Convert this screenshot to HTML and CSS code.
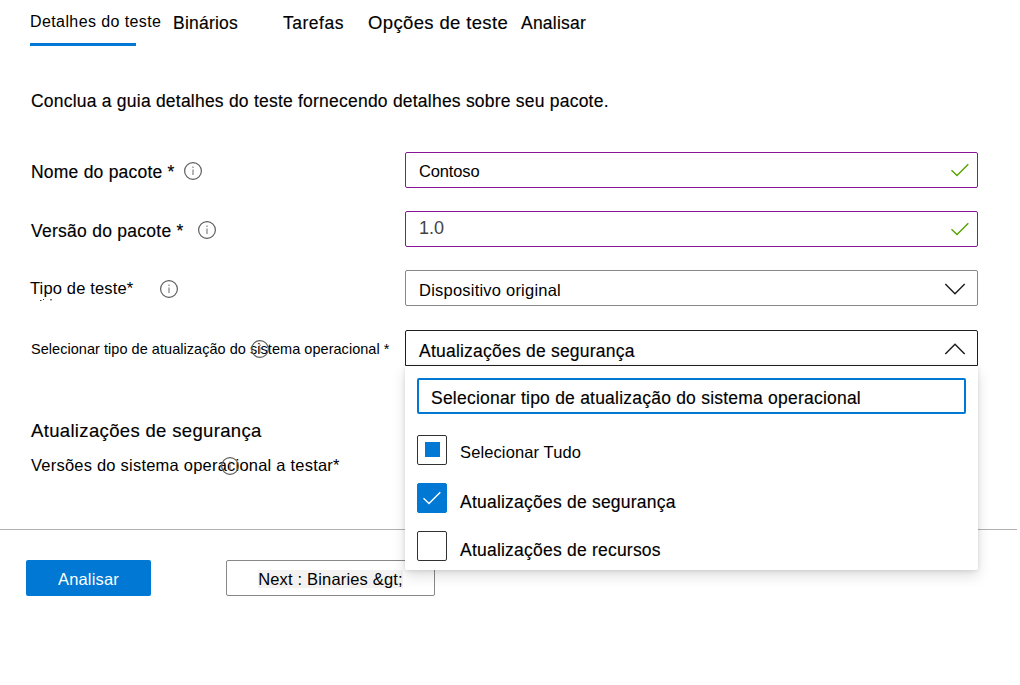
FILE: index.html
```html
<!DOCTYPE html>
<html lang="pt">
<head>
<meta charset="utf-8">
<title>Detalhes do teste</title>
<link rel="stylesheet" href="styles.css">
</head>
<body>
<svg class="defs" width="0" height="0">
  <symbol id="info" viewBox="0 0 20 20"><circle cx="10" cy="10" r="8.4" fill="none" stroke="#605e5c" stroke-width="1.2"/><path d="M10 8.5v5.5M10 5.6v1.4" stroke="#858381" stroke-width="1.2"/></symbol>
  <symbol id="check" viewBox="0 0 20 16"><path d="M1.5 8.3L7 13.6L18.3 2.3" fill="none" stroke="currentColor" stroke-width="1.4"/></symbol>
  <symbol id="down" viewBox="0 0 22 12"><path d="M1.3 1L11 10.7L20.7 1" fill="none" stroke="#1b1a19" stroke-width="1.4"/></symbol>
</svg>
<nav class="tabs">
  <a class="tab tab-active">Detalhes do teste</a>
  <a class="tab tab-bin">Binários</a>
  <a class="tab tab-tasks">Tarefas</a>
  <a class="tab tab-options">Opções de teste</a>
  <a class="tab tab-review">Analisar</a>
</nav>
<p class="intro">Conclua a guia detalhes do teste fornecendo detalhes sobre seu pacote.</p>
<main class="form">
  <div class="row">
    <div class="label label-name"><span>Nome do pacote *</span><svg class="info"><use href="#info"/></svg></div>
    <div class="field valid"><span class="value contoso">Contoso</span><svg class="check"><use href="#check"/></svg></div>
  </div>
  <div class="row">
    <div class="label label-version"><span>Versão do pacote *</span><svg class="info"><use href="#info"/></svg></div>
    <div class="field valid"><span class="value version">1.0</span><svg class="check"><use href="#check"/></svg></div>
  </div>
  <div class="row row-type">
    <div class="label label-type"><span>Tipo de teste*</span><svg class="info"><use href="#info"/></svg>
      <svg class="clipped" viewBox="0 0 16 2"><path d="M1 1.5h1.5M4 .5h1M11 .8h2" stroke="#333" stroke-width="1"/></svg>
    </div>
    <div class="field"><span class="value device">Dispositivo original</span><svg class="chevron"><use href="#down"/></svg></div>
  </div>
  <div class="row row-update">
    <div class="label label-update"><span>Selecionar tipo de atualização do sistema operacional *</span><svg class="info info-over"><use href="#info"/></svg></div>
    <div class="select">
      <div class="field open"><span class="value selected">Atualizações de segurança</span><svg class="chevron up"><use href="#down"/></svg></div>
      <div class="menu">
        <div class="search">Selecionar tipo de atualização do sistema operacional</div>
        <div class="option all"><span class="box partial"></span><span class="option-text">Selecionar Tudo</span></div>
        <div class="option"><span class="box checked"><svg class="check"><use href="#check"/></svg></span><span class="option-text">Atualizações de segurança</span></div>
        <div class="option"><span class="box"></span><span class="option-text">Atualizações de recursos</span></div>
      </div>
    </div>
  </div>
</main>
<section class="versions">
  <h2 class="heading">Atualizações de segurança</h2>
  <div class="os"><span>Versões do sistema operacional a testar*</span><svg class="info os-info"><use href="#info"/></svg></div>
</section>
<footer class="footer">
  <button class="btn primary">Analisar</button>
  <button class="btn next"><span class="mark">Next : Binaries &amp;gt;</span></button>
</footer>
</body>
</html>
```
FILE: styles.css
```css
* { box-sizing: border-box; }
body {
  margin: 0;
  width: 1020px;
  height: 685px;
  overflow: hidden;
  background: #fff;
  color: #000;
  font: 17.5px/20px "Liberation Sans", Arial, sans-serif;
  letter-spacing: 0.22px;
}
.defs { display: block; }
.tabs, .intro, .label-name, .label-version, .selected, .search, .option, .heading { -webkit-text-stroke: 0.15px #000; }
.tabs { display: flex; height: 46px; padding-left: 30px; white-space: nowrap; }
.tab { padding-top: 13px; }
.tab-active {
  width: 106px;
  margin-right: 37px;
  padding-top: 12px;
  border-bottom: 3px solid #0078d4;
  font-size: 16px;
  letter-spacing: 0.4px;
  -webkit-text-stroke: 0;
}
.tab-bin { width: 110px; }
.tab-tasks { width: 85px; letter-spacing: 0.5px; }
.tab-options { width: 153px; font-size: 18.5px; letter-spacing: 0.36px; }
.intro { margin: 45px 0 0 31px; height: 61px; }
.form { display: grid; padding-left: 30px; }
.row { display: grid; grid-template-columns: 375px 573px; height: 59px; }
.row-type { height: 60px; }
.row-update { height: 36px; }
.label { position: relative; display: flex; align-items: flex-start; padding: 10px 0 0 1px; white-space: nowrap; }
.info { flex: none; width: 20px; height: 20px; }
.label .info { margin-top: -1px; }
.label-name { gap: 8px; letter-spacing: 0.22px; }
.label-version { gap: 13px; letter-spacing: 0.26px; }
.label-type { gap: 26px; padding: 8px 0 0; font-size: 16.5px; letter-spacing: 0.15px; }
.label-type .info { margin-top: 1px; }
.label-update { padding-top: 9px; font-size: 14.5px; letter-spacing: 0.04px; }
.label .info-over { position: absolute; left: 220px; top: 9px; margin: 0; }
.clipped { position: absolute; left: 9px; top: 29px; width: 16px; height: 2px; }
.field {
  display: flex;
  justify-content: space-between;
  width: 573px;
  height: 36px;
  padding-left: 13px;
  border: 1px solid #8a8886;
  border-radius: 2px;
}
.valid { border-color: #881798; }
.value { padding-top: 9px; }
.contoso { padding-top: 8px; font-size: 16.5px; letter-spacing: -0.15px; }
.version { padding-top: 6px; font-size: 18px; color: #444; letter-spacing: 0; }
.device { font-size: 16.5px; letter-spacing: 0.22px; }
.selected { padding-top: 10px; }
.check { width: 20px; height: 16px; margin: 9px 7px 0 0; color: #57a300; }
.chevron { width: 22px; height: 12px; margin: 12px 11px 0 0; }
.up { transform: scaleY(-1); }
.select { position: relative; }
.open { border-color: #201f1e; border-radius: 2px 2px 0 0; }
.menu {
  position: absolute;
  z-index: 2;
  left: 0;
  top: 36px;
  width: 573px;
  height: 204px;
  padding: 12px;
  background: #fff;
  border-radius: 0 0 2px 2px;
  box-shadow: 0 6px 14px rgba(0, 0, 0, .13), 0 1px 4px rgba(0, 0, 0, .11);
}
.search {
  height: 36px;
  padding: 8px 0 0 12px;
  border: 2px solid #0078d4;
  border-radius: 2px;
}
.option { display: flex; gap: 13px; height: 48px; }
.all { height: 48px; margin-top: 21px; font-size: 16.5px; letter-spacing: 0.12px; -webkit-text-stroke: 0; }
.box { display: flex; flex: none; width: 30px; height: 30px; border: 1px solid #323130; border-radius: 2px; }
.partial::before { content: ""; width: 15px; height: 15px; margin: 6px 0 0 7px; background: #0078d4; }
.checked { border-color: #0078d4; background: #0078d4; }
.checked .check { margin: 6px 0 0 4px; color: #fff; }
.option-text { padding-top: 9px; }
.all .option-text { padding-top: 7px; }
.versions { height: 163px; padding: 55px 0 0 31px; }
.heading { margin: 0; font-size: 18.5px; font-weight: 400; line-height: 20px; letter-spacing: 0.34px; }
.os { position: relative; padding-top: 14px; font-size: 16.5px; letter-spacing: 0.22px; }
.os-info { position: absolute; left: 189px; top: 15px; }
.footer { display: flex; gap: 75px; width: 1017px; padding: 30px 0 0 26px; border-top: 1px solid #b3b0ad; }
.btn {
  width: 125px;
  height: 36px;
  padding: 1px 0 0;
  border: 0;
  border-radius: 2px;
  font: 16.5px/18px "Liberation Sans", Arial, sans-serif;
  letter-spacing: 0.17px;
}
.primary { background: #0078d4; color: #fff; }
.next { width: 209px; border: 1px solid #8a8886; background: #fff; color: #000; }
.mark { background: #f3f2f1; }
```
